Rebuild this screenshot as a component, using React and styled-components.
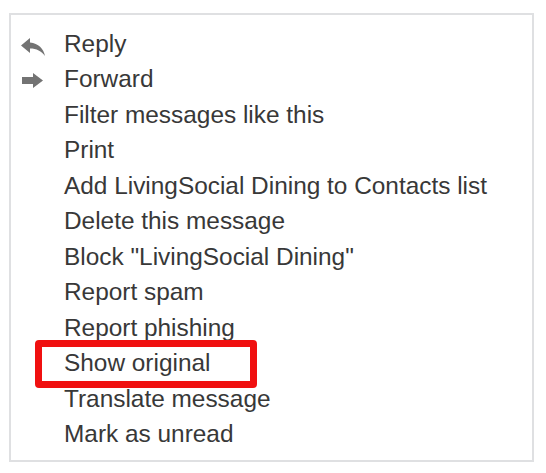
import React from "react";
import styled, { createGlobalStyle } from "styled-components";

const GlobalStyle = createGlobalStyle`
  body {
    margin: 0;
    background: #ffffff;
    font-family: "Liberation Sans", Arial, Helvetica, sans-serif;
  }
`;

const Menu = styled.div`
  margin: 13px 0 0 9px;
  width: 525px;
  height: 449px;
  box-sizing: border-box;
  border: 2px solid #dfe0e2;
  padding-top: 11px;
  display: flex;
  flex-direction: column;
`;

const Row = styled.div`
  position: relative;
  height: 35.5px;
  display: flex;
  align-items: center;
`;

const IconCell = styled.div`
  width: 53px;
  height: 100%;
  display: flex;
  align-items: center;
  padding-left: 10px;
  box-sizing: border-box;
  color: #737373;
`;

const Label = styled.span`
  font-size: 24.4px;
  color: #383838;
  white-space: nowrap;
`;

const Highlight = styled.div`
  position: absolute;
  left: 24px;
  top: -6px;
  width: 222px;
  height: 48px;
  box-sizing: border-box;
  border: 7px solid #f01010;
  border-radius: 4px;
  pointer-events: none;
`;

const ReplySvg = styled.svg`
  margin-top: 6px;
`;

const ForwardSvg = styled.svg`
  margin-left: 1px;
  margin-top: 2px;
`;

const ReplyIcon = () => (
  <ReplySvg width="24" height="18" viewBox="0 0 24 18" fill="currentColor">
    <path d="M9 0 L0 7.5 L9 15 V10.5 C15.5 10.5 20.5 13 24 18 C22.5 10.5 17.5 5.5 9 4.5 Z" />
  </ReplySvg>
);

const ForwardIcon = () => (
  <ForwardSvg width="21" height="15" viewBox="0 0 21 15" fill="currentColor">
    <path d="M0 4 H11 V0 L21 7.5 L11 15 V11 H0 Z" />
  </ForwardSvg>
);

const items = [
  { label: "Reply", icon: <ReplyIcon /> },
  { label: "Forward", icon: <ForwardIcon /> },
  { label: "Filter messages like this" },
  { label: "Print" },
  { label: "Add LivingSocial Dining to Contacts list" },
  { label: "Delete this message" },
  { label: 'Block "LivingSocial Dining"' },
  { label: "Report spam" },
  { label: "Report phishing" },
  { label: "Show original", marked: true },
  { label: "Translate message" },
  { label: "Mark as unread" },
];

const App = () => {
  return (
    <>
      <GlobalStyle />
      <Menu>
        {items.map((item) => (
          <Row key={item.label}>
            <IconCell>{item.icon}</IconCell>
            <Label>{item.label}</Label>
            {item.marked && <Highlight />}
          </Row>
        ))}
      </Menu>
    </>
  );
};

export default App;
